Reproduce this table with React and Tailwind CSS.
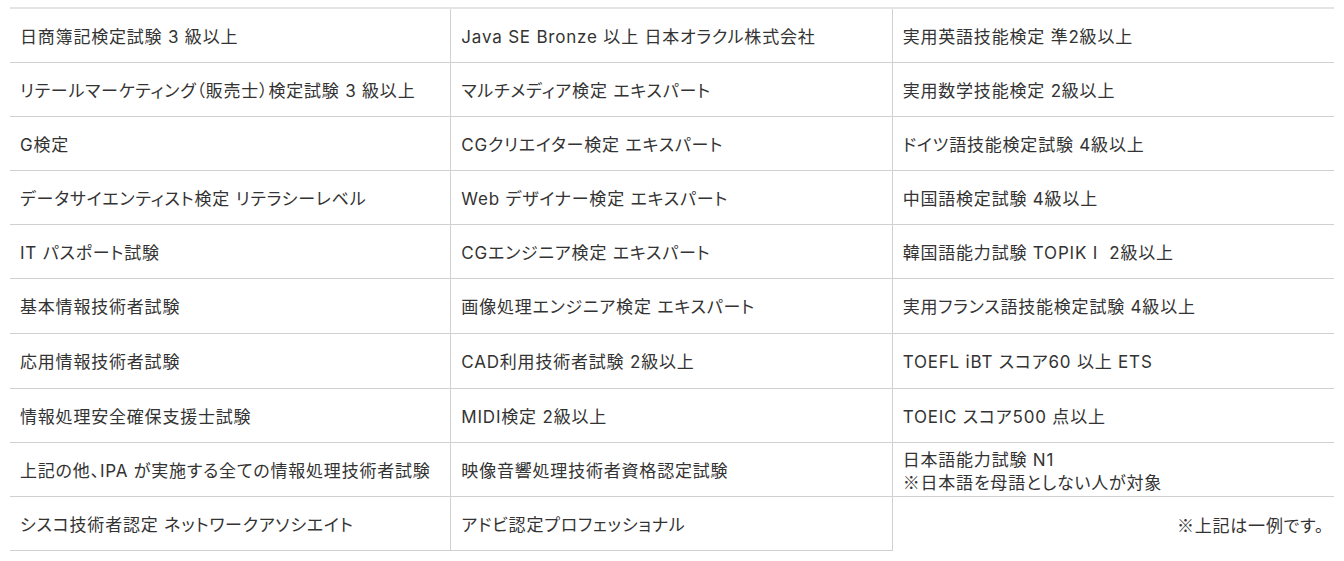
import React from 'react';

const Kome = () => <span style={{ fontFamily: '"Noto Sans CJK JP", sans-serif' }}>※</span>;

const rows = [
    ['日商簿記検定試験 3 級以上', 'Java SE Bronze 以上 日本オラクル株式会社', '実用英語技能検定 準2級以上'],
    ['リテールマーケティング（販売士）検定試験 3 級以上', 'マルチメディア検定 エキスパート', '実用数学技能検定 2級以上'],
    ['G検定', 'CGクリエイター検定 エキスパート', 'ドイツ語技能検定試験 4級以上'],
    ['データサイエンティスト検定 リテラシーレベル', 'Web デザイナー検定 エキスパート', '中国語検定試験 4級以上'],
    ['IT パスポート試験', 'CGエンジニア検定 エキスパート', '韓国語能力試験 TOPIK I  2級以上'],
    ['基本情報技術者試験', '画像処理エンジニア検定 エキスパート', '実用フランス語技能検定試験 4級以上'],
    ['応用情報技術者試験', 'CAD利用技術者試験 2級以上', 'TOEFL iBT スコア60 以上 ETS'],
    ['情報処理安全確保支援士試験', 'MIDI検定 2級以上', 'TOEIC スコア500 点以上'],
    ['上記の他、IPA が実施する全ての情報処理技術者試験', '映像音響処理技術者資格認定試験', 'N1'],
    ['シスコ技術者認定 ネットワークアソシエイト', 'アドビ認定プロフェッショナル', 'NOTE'],
];

const Cell = ({ children, last, tall }) => (
    <div className={`${tall ? 'h-[55px]' : 'h-[54px]'} flex items-center pl-[10px] pt-[4px] border-b border-[#d0d0d0] ${last ? '' : 'border-r'}`}>
        {children}
    </div>
);

const App = () => {
    return (
        <div
            className="w-[1344px] h-[561px] bg-white pt-[7px] px-[10px] text-[#333] text-[17px] tracking-[0.8px] overflow-hidden whitespace-pre"
            style={{ fontFamily: 'Inter, "Noto Sans CJK JP", sans-serif', fontFeatureSettings: '"palt"' }}
        >
            <div className="grid grid-cols-3 border-t-2 border-[#e4e4e4]">
                {rows.map((row, i) => {
                    const tall = i === 5 || i === 6;
                    return (
                        <React.Fragment key={i}>
                            <Cell tall={tall}>{row[0]}</Cell>
                            <Cell tall={tall}>{row[1]}</Cell>
                            {row[2] === 'N1' ? (
                                <div className="h-[54px] flex flex-col justify-center pl-[10px] pt-[4px] border-b border-[#d0d0d0] leading-[22px]">
                                    <span>日本語能力試験 N1</span>
                                    <span><Kome />日本語を母語としない人が対象</span>
                                </div>
                            ) : row[2] === 'NOTE' ? (
                                <div className="h-[54px] flex items-center justify-end pr-[10px] pt-[4px]">
                                    <span><Kome />上記は一例です。</span>
                                </div>
                            ) : (
                                <Cell last tall={tall}>{row[2]}</Cell>
                            )}
                        </React.Fragment>
                    );
                })}
            </div>
        </div>
    );
};

export default App;
